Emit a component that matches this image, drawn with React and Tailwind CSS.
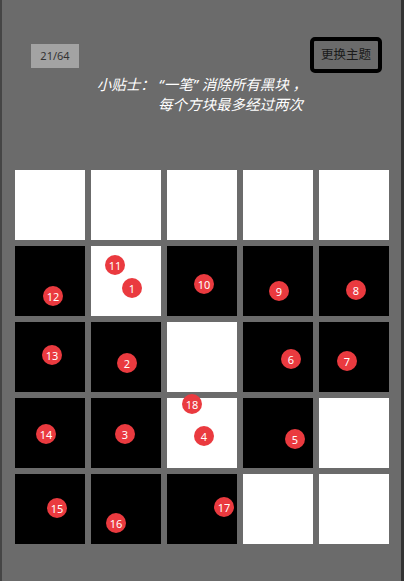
import React from 'react';

// 0 = white, 1 = black
const board = [
  [0, 0, 0, 0, 0],
  [1, 0, 1, 1, 1],
  [1, 1, 0, 1, 1],
  [1, 1, 0, 1, 0],
  [1, 1, 1, 0, 0],
];

// badges per cell: [label, left, top] relative to the cell
const marks = {
  '1-0': [['12', 28, 40]],
  '1-1': [['11', 14, 9], ['1', 31, 32]],
  '1-2': [['10', 27, 28]],
  '1-3': [['9', 26, 35]],
  '1-4': [['8', 27, 34]],
  '2-0': [['13', 27, 23]],
  '2-1': [['2', 26, 31]],
  '2-3': [['6', 38, 27]],
  '2-4': [['7', 18, 29]],
  '3-0': [['14', 21, 26]],
  '3-1': [['3', 24, 26]],
  '3-2': [['18', 15, -4], ['4', 27, 28]],
  '3-3': [['5', 42, 31]],
  '4-0': [['15', 32, 24]],
  '4-1': [['16', 15, 39]],
  '4-2': [['17', 47, 23]],
};

const Badge = ({ label, left, top }) => (
  <span
    className="absolute z-10 flex h-[20px] w-[20px] items-center justify-center rounded-full bg-[#ea3a3f] text-[11px] leading-none text-white"
    style={{ left, top }}
  >
    {label}
  </span>
);

export default function App() {
  return (
    <div
      className="h-[581px] w-[404px] overflow-hidden border-l-2 border-r-[3px] border-l-[#454545] border-r-[#333333] bg-[#6b6b6b] pl-[13px] pr-[12px]"
      style={{ fontFamily: '"Noto Sans", "Noto Sans CJK SC", sans-serif' }}
    >
      {/* Header */}
      <div className="flex items-start justify-between pt-[37px] pl-[16px] pr-[7px]">
        <div className="mt-[7px] flex h-[24px] w-[48px] items-center justify-center bg-[#a3a3a3] text-[11px] text-[#333]">
          21/64
        </div>
        <button className="flex h-[36px] w-[72px] items-center justify-center rounded-[5px] border-[4px] border-black text-[12.5px] text-[#1a1a1a]">
          更换主题
        </button>
      </div>

      <div className="mt-[1px] flex justify-end pr-[82px] text-[14.5px] italic leading-[20px] text-white">
        <div className="text-right">
          <div>小贴士： “一笔” 消除所有黑块 ，</div>
          <div className="pr-[4px]">每个方块最多经过两次</div>
        </div>
      </div>

      {/* Board */}
      <div className="mt-[56px] grid grid-cols-[repeat(5,70px)] gap-[6px]">
        {board.map((row, r) =>
          row.map((c, i) => (
            <div
              key={`${r}-${i}`}
              className={`relative h-[70px] w-[70px] ${c ? 'bg-black' : 'bg-white'}`}
            >
              {(marks[`${r}-${i}`] || []).map(([label, left, top]) => (
                <Badge key={label} label={label} left={left} top={top} />
              ))}
            </div>
          ))
        )}
      </div>
    </div>
  );
}
